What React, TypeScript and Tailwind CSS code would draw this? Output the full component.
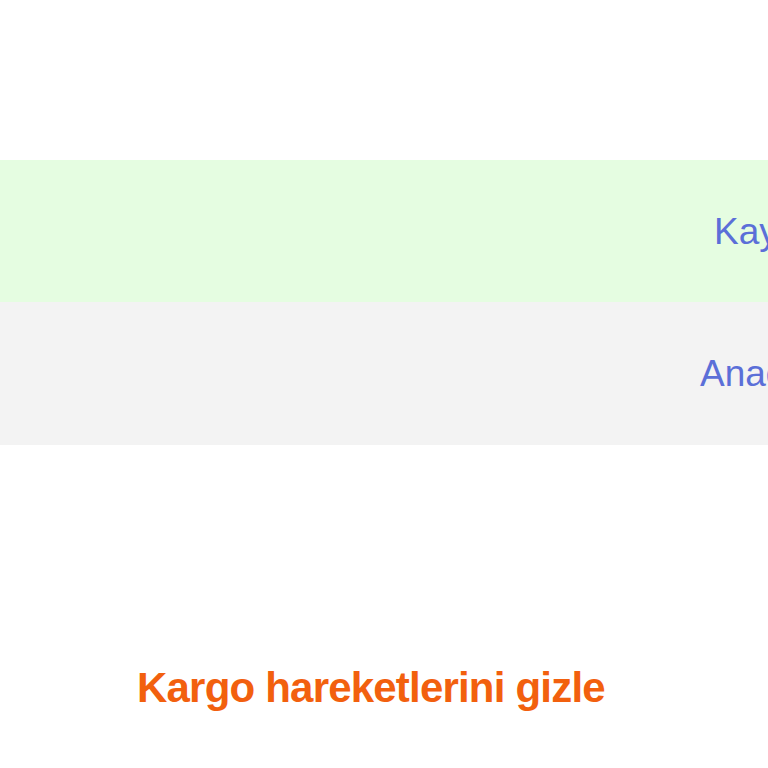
import React from 'react';

const rows = [
  { label: 'Kayıt Tarihi', bg: 'bg-[#e5fde1]', pad: 'pl-[714px]', h: 'h-[142px]' },
  { label: 'Anadolu Yakası', bg: 'bg-[#f3f3f3]', pad: 'pl-[700px]', h: 'h-[143px]' },
];

export default function App() {
  return (
    <div className="w-[768px] h-[768px] overflow-hidden bg-white font-['Liberation_Sans',Arial,sans-serif]">
      {/* table rows */}
      <div className="pt-[160px]">
        {rows.map((r) => (
          <div key={r.label} className={`flex items-center ${r.h} ${r.bg} ${r.pad}`}>
            <span className="whitespace-nowrap text-[37px] leading-none text-[#5b6fd8]">{r.label}</span>
          </div>
        ))}
      </div>

      {/* toggle link */}
      <div className="mt-[222px] pl-[137px]">
        <span className="whitespace-nowrap text-[42px] leading-none font-bold tracking-[-0.8px] text-[#f2600e]">
          Kargo hareketlerini gizle
        </span>
      </div>
    </div>
  );
}
